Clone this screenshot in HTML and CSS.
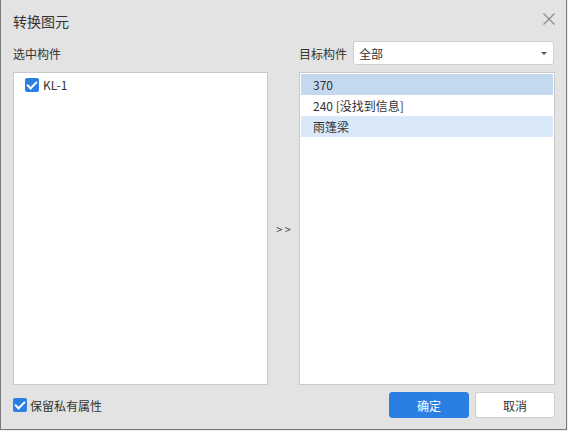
FILE: index.html
```html
<!DOCTYPE html>
<html lang="zh-CN">
<head>
    <meta charset="UTF-8">
    <meta name="viewport" content="width=device-width, initial-scale=1.0">
    <title>转换图元</title>
    <link rel="stylesheet" href="styles.css">
</head>
<body>
    <div class="dialog">
        <div class="dialog-header">
            <span class="dialog-title">转换图元</span>
            <span class="close-btn">
                <svg width="12" height="12" viewBox="0 0 12 12">
                    <path d="M0.5 0.5 L11.5 11.5 M11.5 0.5 L0.5 11.5" stroke="#8a8a8a" stroke-width="1.2" fill="none"/>
                </svg>
            </span>
        </div>

        <div class="panes">
            <div class="pane-label">选中构件</div>
            <div></div>
            <div class="pane-label target">
                <span>目标构件</span>
                <div class="select">
                    <span>全部</span>
                    <span class="select-arrow"></span>
                </div>
            </div>

            <div class="list">
                <div class="list-row">
                    <span class="check"></span>
                    <span>KL-1</span>
                </div>
            </div>
            <div class="arrows">&gt; &gt;</div>
            <div class="list target-list">
                <div class="item selected">370</div>
                <div class="item">240 [没找到信息]</div>
                <div class="item hover">雨篷梁</div>
            </div>
        </div>

        <div class="dialog-footer">
            <label class="keep">
                <span class="check"></span>
                <span>保留私有属性</span>
            </label>
            <div class="buttons">
                <button class="btn primary">确定</button>
                <button class="btn">取消</button>
            </div>
        </div>
    </div>
</body>
</html>
```

FILE: styles.css
```css
body {
    margin: 0;
    background: #ececec;
    font-family: "Noto Sans CJK SC", "Noto Sans", sans-serif;
    font-size: 12px;
    color: #333;
}

.dialog {
    width: 567px;
    height: 430px;
    box-sizing: border-box;
    background: #e3e3e3;
    border: 1px solid #7b7b7b;
    border-top: none;
    display: flex;
    flex-direction: column;
}

.dialog-header {
    height: 40px;
    padding: 0 11px 0 12px;
    display: flex;
    align-items: center;
    justify-content: space-between;
}

.dialog-title {
    font-size: 14px;
    margin-top: 1px;
}

.close-btn {
    display: flex;
    margin-top: -2px;
}

.panes {
    display: grid;
    grid-template-columns: 255px 31px 256px;
    grid-template-rows: 26px 313px;
    row-gap: 6px;
    padding-left: 12px;
}

.pane-label {
    display: flex;
    align-items: center;
}

.pane-label.target {
    gap: 6px;
}

.select {
    flex: 1;
    height: 24px;
    margin-right: 1px;
    box-sizing: border-box;
    background: #fff;
    border: 1px solid #d0d0d0;
    border-radius: 3px;
    display: flex;
    align-items: center;
    justify-content: space-between;
    padding: 0 6px 0 5px;
}

.select-arrow {
    width: 0;
    height: 0;
    border-left: 3px solid transparent;
    border-right: 3px solid transparent;
    border-top: 3px solid #555;
}

.list {
    background: #fff;
    border: 1px solid #c9c9c9;
    box-sizing: border-box;
    padding: 1px;
}

.list-row {
    height: 21px;
    display: flex;
    align-items: center;
    gap: 4px;
    padding-left: 10px;
}

.arrows {
    display: flex;
    align-items: center;
    justify-content: center;
    font-size: 11px;
    color: #444;
}

.item {
    height: 21px;
    line-height: 21px;
    padding-left: 12px;
}

.item.selected {
    background: #c4d9f0;
}

.item.hover {
    background: #d9e9fa;
}

.check {
    width: 14px;
    height: 14px;
    border-radius: 2px;
    background: #2c7fe2;
    position: relative;
    flex: none;
}

.check::after {
    content: "";
    position: absolute;
    left: 4px;
    top: 1px;
    width: 4px;
    height: 8px;
    border: solid #fff;
    border-width: 0 2px 2px 0;
    transform: rotate(45deg);
}

.dialog-footer {
    margin-top: 7px;
    height: 26px;
    padding: 0 11px 0 12px;
    display: flex;
    align-items: center;
    justify-content: space-between;
}

.keep {
    display: flex;
    align-items: center;
    gap: 3px;
}

.buttons {
    display: flex;
    gap: 6px;
}

.btn {
    width: 80px;
    height: 26px;
    font-family: inherit;
    font-size: 12px;
    color: #333;
    background: #fff;
    border: 1px solid #cfcfcf;
    border-radius: 3px;
}

.btn.primary {
    background: #2c7fe2;
    border-color: #2c7fe2;
    color: #fff;
}
```
